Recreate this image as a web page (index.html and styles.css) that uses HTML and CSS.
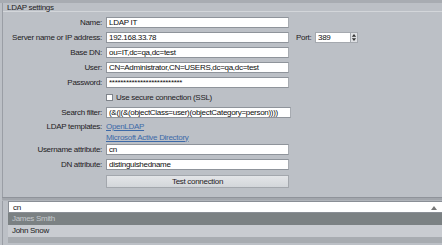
FILE: index.html
```html
<!DOCTYPE html>
<html lang="en">
<head>
  <meta charset="UTF-8">
  <title>LDAP settings</title>
  <link rel="stylesheet" href="styles.css">
</head>
<body>

<div class="panel">
  <div class="topbar"></div>
  <div class="legend">LDAP settings</div>
  <div class="form">
    <div class="row"><label>Name:</label><input class="field" value="LDAP IT"></div>
    <div class="row">
      <label>Server name or IP address:</label><input class="field" value="192.168.33.78">
      <span class="port-label">Port:</span><input class="port" value="389">
      <span class="spin">
        <svg width="7" height="11" viewBox="0 0 7 11"><path d="M3.5 1.5L6 4.5H1z M3.5 9.5L6 6.5H1z" fill="#333"/></svg>
      </span>
    </div>
    <div class="row"><label>Base DN:</label><input class="field" value="ou=IT,dc=qa,dc=test"></div>
    <div class="row"><label>User:</label><input class="field" value="CN=Administrator,CN=USERS,dc=qa,dc=test"></div>
    <div class="row"><label>Password:</label><input class="field" value="**************************"></div>
    <div class="row"><label></label><span class="check"></span><span class="check-text">Use secure connection (SSL)</span></div>
    <div class="row"><label>Search filter:</label><input class="field filter" value="(&amp;(|(&amp;(objectClass=user)(objectCategory=person))))"></div>
    <div class="row link-row"><label>LDAP templates:</label><a href="#">OpenLDAP</a></div>
    <div class="row link-row2"><label></label><a href="#">Microsoft Active Directory</a></div>
    <div class="row"><label>Username attribute:</label><input class="field" value="cn"></div>
    <div class="row"><label>DN attribute:</label><input class="field" value="distinguishedname"></div>
    <div class="row btn-row"><label></label><button class="test">Test connection</button></div>
  </div>

  <div class="divider"></div>

  <div class="combo">
    <div class="combo-input">
      <span>cn</span>
      <svg width="6" height="4" viewBox="0 0 6 4"><path d="M0 4L3 0L6 4z" fill="#777"/></svg>
    </div>
    <div class="item selected">James Smith</div>
    <div class="item">John Snow</div>
  </div>
  <div class="bottom"></div>
</div>

</body>
</html>
```

FILE: styles.css
```css
* { box-sizing: border-box; }
html, body { margin: 0; padding: 0; }
body { background: #bcc0c6; font-family: "Liberation Sans", Arial, sans-serif; font-size: 8px; letter-spacing: -0.3px; color: #1f2124; width: 442px; height: 245px; overflow: hidden; }

.panel { border-left: 1px solid #9a9ea5; margin-left: 2px; height: 245px; }
.topbar { height: 3px; background: #a8acb2; margin-left: -3px; }
.legend { height: 9px; line-height: 9px; padding-left: 4px; color: #1f2124; border-bottom: 1px solid #d3d6da; }

.form { padding-top: 3px; }
.row { display: flex; align-items: center; height: 15px; }
.row label { width: 99px; text-align: right; margin-right: 4px; flex: none; }
.field { width: 183px; height: 11px; border: 1px solid #8f949b; border-right-color: #a7abb1; background: #fff; font: inherit; letter-spacing: inherit; color: #0d0d0d; padding: 0 2px; outline: none; }
.filter { width: 185px; }

.port-label { margin-left: 7px; width: 19px; }
.port { width: 35px; height: 11px; border: 1px solid #a5a9af; border-right: none; background: #fff; font: inherit; letter-spacing: inherit; color: #0d0d0d; padding: 0 2px; outline: none; }
.spin { width: 8px; height: 11px; background: #dfe1e4; border: 1px solid #a5a9af; display: flex; align-items: center; justify-content: center; }

.check { width: 7px; height: 7px; background: #fff; border: 1px solid #7f848b; margin-right: 3px; }

.link-row { height: 12px; }
.link-row2 { height: 10px; }
a { color: #3d6aa8; text-decoration: underline; }

.btn-row { height: 13px; margin-top: 3px; }
.test { width: 183px; height: 13px; padding: 0; border: 1px solid #a3a7ad; background: linear-gradient(#e3e5e8, #d3d6da); font: inherit; letter-spacing: inherit; color: #1f2124; }

.divider { margin-top: 9px; height: 4px; background: #a2a6ac; border-top: 1px solid #8f939a; border-bottom: 1px solid #b0b4ba; margin-left: -1px; }

.combo { margin-left: 5px; }
.combo-input { height: 12px; background: #fff; border: 1px solid #8a8f96; border-right: none; display: flex; align-items: center; justify-content: space-between; padding: 0 5px 0 4px; color: #111; }
.combo-input svg { margin-top: 2px; }
.item { height: 12px; line-height: 12px; padding-left: 4px; background: #c9ccd1; color: #1a1a1a; }
.item.selected { background: #7b8183; color: #c5c9cd; }
.bottom { height: 6px; background: #a8acb1; margin-left: 5px; }
```
